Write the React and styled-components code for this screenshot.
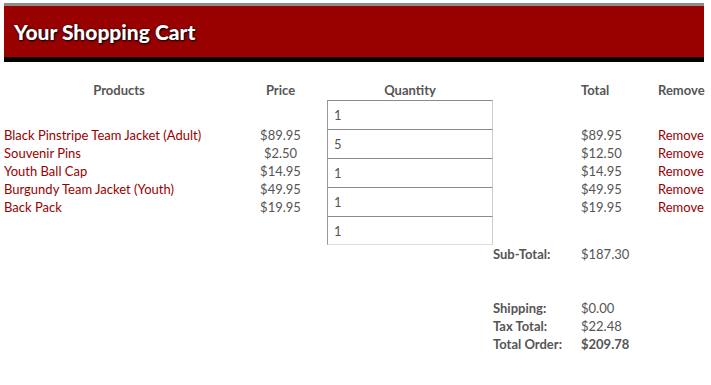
import React from "react";
import styled, { createGlobalStyle } from "styled-components";

const GlobalStyle = createGlobalStyle`
  html, body {
    margin: 0;
    padding: 0;
    background: #fff;
  }
  body {
    font-family: Lato, "Liberation Sans", sans-serif;
    font-size: 13px;
    color: #555;
  }
`;

const Page = styled.div`
  width: 700px;
  padding: 3px 0 0 4px;
`;

const Banner = styled.header`
  height: 51px;
  background-color: #990000;
  border-top: 3px solid #8c8c8c;
  border-bottom: 5px solid #000;
  display: flex;
  align-items: center;
  padding-left: 10px;
`;

const Title = styled.h1`
  margin: 0;
  font-size: 21px;
  font-weight: 900;
  color: #fff;
  text-shadow: 1px 1px 2px #000, 0 0 2px #2a0000;
`;

const Cart = styled.div`
  display: grid;
  grid-template-columns: 230px 93px 166px 88px 77px 53px;
  margin-top: 19px;
  line-height: 18px;
`;

const HeadCell = styled.div`
  font-weight: 700;
  color: #555;
  text-align: ${(props) => props.align || "center"};
  height: 19px;
`;

const Column = styled.div`
  display: flex;
  flex-direction: column;
  align-self: center;
  align-items: ${(props) => (props.center ? "center" : "flex-start")};
  color: ${(props) => (props.red ? "#990000" : "#555")};
  margin-top: -3px;
`;

const Inputs = styled.div`
  display: flex;
  flex-direction: column;
`;

const QtyInput = styled.input`
  box-sizing: border-box;
  width: 166px;
  height: 29px;
  margin: 0;
  padding: 0 6px;
  font-family: inherit;
  font-size: 13px;
  color: #555;
  background: #fff;
  border: 1px solid #ccc;
  border-top-color: #8a8a8a;
  border-left-color: #9a9a9a;
  border-bottom: none;
  &:last-child {
    border-bottom: 1px solid #ddd;
  }
`;

const Label = styled.div`
  font-weight: 700;
  grid-column: 4;
  margin-top: ${(props) => props.gap || 0}px;
`;

const Value = styled.div`
  grid-column: 5 / span 2;
  font-weight: ${(props) => (props.bold ? 700 : 400)};
  margin-top: ${(props) => props.gap || 0}px;
`;

const items = [
  { name: "Black Pinstripe Team Jacket (Adult)", price: "$89.95", qty: 1, total: "$89.95" },
  { name: "Souvenir Pins", price: "$2.50", qty: 5, total: "$12.50" },
  { name: "Youth Ball Cap", price: "$14.95", qty: 1, total: "$14.95" },
  { name: "Burgundy Team Jacket (Youth)", price: "$49.95", qty: 1, total: "$49.95" },
  { name: "Back Pack", price: "$19.95", qty: 1, total: "$19.95" },
];

const App = () => {
  return (
    <Page>
      <GlobalStyle />
      <Banner>
        <Title>Your Shopping Cart</Title>
      </Banner>
      <Cart>
        <HeadCell>Products</HeadCell>
        <HeadCell>Price</HeadCell>
        <HeadCell>Quantity</HeadCell>
        <HeadCell />
        <HeadCell align="left">Total</HeadCell>
        <HeadCell align="left">Remove</HeadCell>

        <Column red>
          {items.map((item) => (
            <span key={item.name}>{item.name}</span>
          ))}
        </Column>
        <Column center>
          {items.map((item) => (
            <span key={item.name}>{item.price}</span>
          ))}
        </Column>
        <Inputs>
          {items.map((item) => (
            <QtyInput key={item.name} defaultValue={item.qty} />
          ))}
        </Inputs>
        <div />
        <Column>
          {items.map((item) => (
            <span key={item.name}>{item.total}</span>
          ))}
        </Column>
        <Column red>
          {items.map((item) => (
            <span key={item.name}>Remove</span>
          ))}
        </Column>

        <Label>Sub-Total:</Label>
        <Value>$187.30</Value>
        <Label gap={36}>Shipping:</Label>
        <Value gap={36}>$0.00</Value>
        <Label>Tax Total:</Label>
        <Value>$22.48</Value>
        <Label>Total Order:</Label>
        <Value bold>$209.78</Value>
      </Cart>
    </Page>
  );
};

export default App;
